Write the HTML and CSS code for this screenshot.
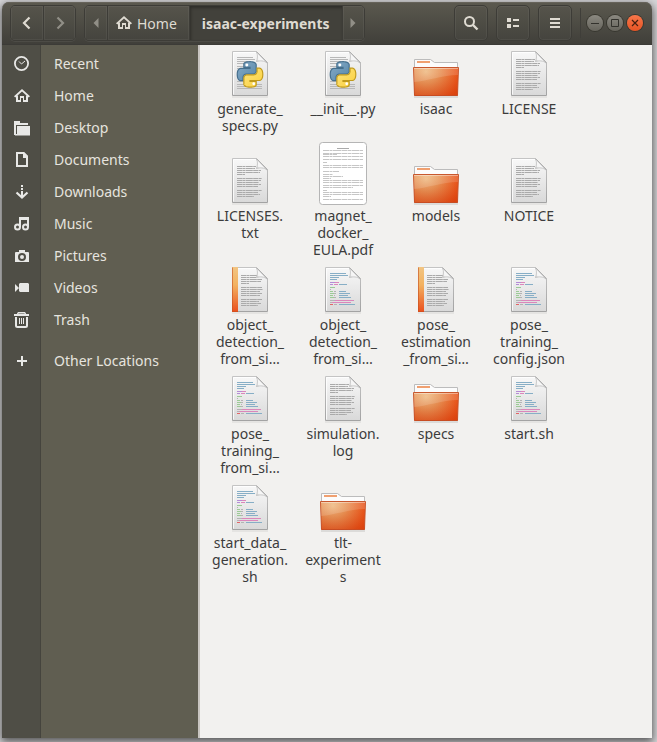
FILE: index.html
```html
<!DOCTYPE html>
<html lang="en">
<head>
<meta charset="utf-8">
<title>isaac-experiments</title>
<link rel="stylesheet" href="styles.css">
</head>
<body>
<svg class="defs" aria-hidden="true">
  <defs>
    <linearGradient id="paper" x1="0" y1="0" x2="0" y2="1"><stop offset="0" stop-color="#f8f8f8"/><stop offset="1" stop-color="#d9d9d9"/></linearGradient>
    <linearGradient id="edge" x1="0" y1="0" x2="0" y2="1"><stop offset="0" stop-color="#c4c4c4"/><stop offset="1" stop-color="#a3a3a3"/></linearGradient>
    <linearGradient id="fold" x1="0" y1="1" x2="1" y2="0"><stop offset="0" stop-color="#b9b9b9"/><stop offset=".25" stop-color="#f4f4f4"/><stop offset="1" stop-color="#ffffff"/></linearGradient>
    <linearGradient id="spine" x1="0" y1="0" x2="0" y2="1"><stop offset="0" stop-color="#f2c583"/><stop offset=".4" stop-color="#f3b160"/><stop offset="1" stop-color="#ea4f1d"/></linearGradient>
    <radialGradient id="folderFace" gradientUnits="userSpaceOnUse" cx="14" cy="22" r="36"><stop offset="0" stop-color="#f0c088"/><stop offset=".35" stop-color="#e99a5c"/><stop offset=".9" stop-color="#ea5217"/><stop offset="1" stop-color="#e8490f"/></radialGradient>
    <linearGradient id="folderShade" x1="0" y1="0" x2="0" y2="1"><stop offset="0" stop-color="#d5501c" stop-opacity="0"/><stop offset="1" stop-color="#c63a10" stop-opacity=".4"/></linearGradient>
    <linearGradient id="pyBlue" x1="0" y1="0" x2="1" y2="1"><stop offset="0" stop-color="#86abc8"/><stop offset="1" stop-color="#5787a8"/></linearGradient>
    <linearGradient id="pyYellow" x1="0" y1="0" x2="1" y2="1"><stop offset="0" stop-color="#fbd03c"/><stop offset="1" stop-color="#fde47e"/></linearGradient>

    <symbol id="page" viewBox="0 0 48 48">
      <path d="M6 47H42" stroke="#000" stroke-opacity=".1"/>
      <path d="M6.500 1.500H30.500L41.500 12.500V45.500H6.500Z" fill="url(#paper)" stroke="url(#edge)"/>
      <path d="M7.500 44.500V2.500H30" fill="none" stroke="#fff" stroke-opacity=".8"/>
      <path d="M30.500 2C32 5 31.500 9 30.500 11.500C34 10.500 38 10.500 41 13Z" fill="url(#fold)" stroke="#b4b4b4" stroke-width=".7"/>
      <path d="M30.500 1.500L41.500 12.500" stroke="#b0b0b0"/>
    </symbol>
    <symbol id="doc-text" viewBox="0 0 48 48">
      <use href="#page"/>
      <path d="M11 9.500H30M11 11.500H29M11 13.500H35M11 15.500H34M11 17.500H19M11 21.500H36M11 23.500H35M11 25.500H33M11 27.500H35M11 29.500H32M11 33.500H36M11 35.500H32M11 37.500H34M11 39.500H28" stroke="#aaa" stroke-dasharray="5 .4 3 .4 7 .4" fill="none"/>
    </symbol>
    <symbol id="doc-book" viewBox="0 0 48 48">
      <use href="#page"/>
      <path d="M15 9.500H31M15 11.500H30M15 13.500H36M15 15.500H35M15 17.500H23M15 21.500H36M15 23.500H37M15 25.500H34M15 27.500H36M15 29.500H34M15 33.500H36M15 35.500H33M15 37.500H35M15 39.500H32" stroke="#aaa" stroke-dasharray="5 .4 3 .4 7 .4" fill="none"/>
      <path d="M6 1H12V46H6Z" fill="url(#spine)"/>
      <path d="M6.500 1.500V45.500H12" stroke="#c5501f" stroke-opacity=".6" fill="none"/>
    </symbol>
    <symbol id="doc-code" viewBox="0 0 48 48">
      <use href="#page"/>
      <g fill="none" stroke-width="1">
        <path stroke="#87aec6" d="M11 7.500H27M11 9.500H29M11 11.500H20M11 13.500H18M20 18.500H28M20 25.500H27M20 27.500H31M20 29.500H29M20 31.500H32M20 38.500H36"/>
        <path stroke="#b58bd6" d="M11 16.500H16M11 18.500H14"/>
        <path stroke="#db86bb" d="M16 16.500H20M15 18.500H19M16 34.500H35M12 36.500H32"/>
        <path stroke="#9bcb95" d="M11 21.500H16M11 25.500H14M11 27.500H15M11 29.500H14M11 31.500H15"/>
        <path stroke="#b3b3b3" d="M11 23.500H12M15 25.500H17M15 27.500H17M15 29.500H16M15 31.500H17M11 34.500H16M11 36.500H13M15 38.500H18"/>
        <path stroke="#e26666" d="M11 38.500H14"/>
      </g>
    </symbol>
    <symbol id="doc-python" viewBox="0 0 48 48">
      <use href="#page"/>
      <path d="M11 7.500H27M11 9.500H29M11 11.500H25M11 13.500H27M11 16.500H20M11 18.500H30M11 21.500H36M11 24.500H30M11 27.500H30M11 31.500H20M11 34.500H36M11 36.500H36M11 38.500H36" stroke="#b8b8b8" fill="none"/>
      <g transform="translate(11.300 11.700) scale(1.060)" stroke-width="1.100">
        <path fill="url(#pyBlue)" stroke="#456f8d" d="M14.25.18l.9.2.73.26.59.3.45.32.34.34.25.34.16.33.1.3.04.26.02.2-.01.13V8.500l-.05.63-.13.55-.21.46-.26.38-.3.31-.33.25-.35.19-.35.14-.33.1-.3.07-.26.04-.21.02H8.770l-.69.05-.59.14-.5.22-.41.27-.33.32-.27.35-.2.36-.15.37-.1.35-.07.32-.04.27-.02.21v3.060H3.170l-.21-.03-.28-.07-.32-.12-.35-.18-.36-.26-.36-.36-.35-.46-.32-.59-.28-.73-.21-.88-.14-1.050-.05-1.230.06-1.220.16-1.040.24-.87.32-.71.36-.57.4-.44.42-.33.42-.24.4-.16.36-.1.32-.05.24-.01h.16l.06.01h8.160v-.83H6.180l-.01-2.750-.02-.37.05-.34.11-.31.17-.28.25-.26.31-.23.38-.2.44-.18.51-.15.58-.12.64-.1.71-.06.77-.04.84-.02 1.270.05z"/>
        <path transform="rotate(180 12 12)" fill="url(#pyYellow)" stroke="#c09a1c" d="M14.25.18l.9.2.73.26.59.3.45.32.34.34.25.34.16.33.1.3.04.26.02.2-.01.13V8.500l-.05.63-.13.55-.21.46-.26.38-.3.31-.33.25-.35.19-.35.14-.33.1-.3.07-.26.04-.21.02H8.770l-.69.05-.59.14-.5.22-.41.27-.33.32-.27.35-.2.36-.15.37-.1.35-.07.32-.04.27-.02.21v3.060H3.170l-.21-.03-.28-.07-.32-.12-.35-.18-.36-.26-.36-.36-.35-.46-.32-.59-.28-.73-.21-.88-.14-1.050-.05-1.230.06-1.220.16-1.040.24-.87.32-.71.36-.57.4-.44.42-.33.42-.24.4-.16.36-.1.32-.05.24-.01h.16l.06.01h8.160v-.83H6.180l-.01-2.750-.02-.37.05-.34.11-.31.17-.28.25-.26.31-.23.38-.2.44-.18.51-.15.58-.12.64-.1.71-.06.77-.04.84-.02 1.270.05z"/>
        <circle cx="9" cy="3.200" r="1.400" fill="#fff" stroke="none"/>
        <circle cx="15.500" cy="20.800" r="1.300" fill="#fff" stroke="none"/>
      </g>
    </symbol>
    <symbol id="folder" viewBox="0 0 48 48">
      <path d="M2 47H46" stroke="#000" stroke-opacity=".18"/>
      <path d="M2.500 18V9.500H18.500L22.500 12.500H45.500V18Z" fill="#fcfcfc" stroke="#bcbcbc"/>
      <path d="M5 12H18" stroke="#f0a070" stroke-width="2"/>
      <path d="M1.500 17.500H46.500L45.500 45.500H2.500Z" fill="url(#folderFace)" stroke="#c8582e"/>
      <path d="M2 17.500H46V46H2Z" fill="url(#folderShade)"/>
      <path d="M2 18H46V25C30 25 16 31 2 32Z" fill="#fff" fill-opacity=".14"/>
      <path d="M2 18.500H46" stroke="#fff" stroke-opacity=".4"/>
    </symbol>
    <symbol id="pdf" viewBox="0 0 48 63">
      <rect x=".5" y=".5" width="47" height="62" rx="3" fill="#fff" stroke="#b5b5b5"/>
      <path d="M18 6.500H30" stroke="#aaa"/>
      <path d="M4 8.500H44M4 11.500H44M4 12.500H18M4 14.500H44M4 17.500H44M4 20.500H8M4 23.500H44M4 25.500H44M4 29.500H20M4 32.500H14M4 34.500H24M4 36.500H12M4 38.500H44M4 40.500H44M4 43.500H44M4 45.500H34M4 48.500H8M4 50.500H44M4 52.500H44M4 54.500H12M4 57.500H44" stroke="#c6c6c6" stroke-dasharray="6 .5 3 .5 8 .5"/>
    </symbol>

    <symbol id="i-home" viewBox="0 0 16 16">
      <path d="M8 1L16 8.200L14.700 9.500L8 3.600L1.300 9.500L0 8.200Z" fill="currentColor"/>
      <path d="M3 7.500V13H6.500M9.500 13H13V7.500" fill="none" stroke="currentColor" stroke-width="2"/>
      <path d="M6 8H10V14H9V10H7V14H6Z" fill="currentColor"/>
    </symbol>
  </defs>
</svg>

<div class="window">
  <header class="bar">
    <div class="group">
      <button class="tool" type="button" aria-label="Back"><svg width="16" height="16" viewBox="0 0 16 16"><path d="M10.500 2.500L5 8L10.500 13.500" fill="none" stroke="currentColor" stroke-width="2.200"/></svg></button>
      <button class="tool dim" type="button" aria-label="Forward"><svg width="16" height="16" viewBox="0 0 16 16"><path d="M5.500 2.500L11 8L5.500 13.500" fill="none" stroke="currentColor" stroke-width="2.200"/></svg></button>
    </div>
    <nav class="group path" aria-label="Path">
      <button class="tool slim dim" type="button" aria-label="Scroll left"><svg width="10" height="10" viewBox="0 0 10 10"><path d="M7.500 0V10L2.500 5Z" fill="currentColor"/></svg></button>
      <button class="tool crumb" type="button"><svg width="16" height="16"><use href="#i-home"/></svg>Home</button>
      <button class="tool crumb current" type="button">isaac-experiments</button>
      <button class="tool slim dim" type="button" aria-label="Scroll right"><svg width="10" height="10" viewBox="0 0 10 10"><path d="M2.500 0V10L7.500 5Z" fill="currentColor"/></svg></button>
    </nav>
    <div class="actions">
      <button class="tool single" type="button" aria-label="Search"><svg width="16" height="16" viewBox="0 0 16 16"><circle cx="6.500" cy="6.500" r="4.500" fill="none" stroke="currentColor" stroke-width="2"/><path d="M10 10L14.500 14.500" stroke="currentColor" stroke-width="2.400"/></svg></button>
      <button class="tool single" type="button" aria-label="View as list"><svg width="16" height="16" viewBox="0 0 16 16"><path d="M2 3H6V7H2ZM2 9H6V13H2ZM8 4H14V6H8ZM8 10H14V12H8Z" fill="currentColor"/></svg></button>
      <button class="tool single" type="button" aria-label="Menu"><svg width="16" height="16" viewBox="0 0 16 16"><path d="M3 3H13V5H3ZM3 7H13V9H3ZM3 11H13V13H3Z" fill="currentColor"/></svg></button>
    </div>
    <div class="controls">
      <button class="ctl" type="button" aria-label="Minimize"><svg width="10" height="10" viewBox="0 0 10 10"><path d="M1 5.500H9" stroke="currentColor"/></svg></button>
      <button class="ctl" type="button" aria-label="Maximize"><svg width="10" height="10" viewBox="0 0 10 10"><path d="M1.500 1.500H8.500V8.500H1.500Z" fill="none" stroke="currentColor"/></svg></button>
      <button class="ctl close" type="button" aria-label="Close"><svg width="10" height="10" viewBox="0 0 10 10"><path d="M2 2L8 8M8 2L2 8" stroke="currentColor" stroke-width="1.200"/></svg></button>
    </div>
  </header>

  <div class="body">
    <nav class="side" aria-label="Places">
      <a class="place" href="#recent"><span class="ico"><svg width="16" height="16" viewBox="0 0 16 16"><circle cx="7.500" cy="7.500" r="6.600" fill="none" stroke="currentColor" stroke-width="1.800"/><path d="M5 5.500L7.500 8L11 5" fill="none" stroke="currentColor"/></svg></span>Recent</a>
      <a class="place" href="#home"><span class="ico"><svg width="16" height="16"><use href="#i-home"/></svg></span>Home</a>
      <a class="place" href="#desktop"><span class="ico"><svg width="16" height="16" viewBox="0 0 16 16"><path d="M0 1H6V3H14V5H2V15H0Z" fill="currentColor"/><path d="M3 6H16V15.500H1V14H3Z" fill="currentColor"/></svg></span>Desktop</a>
      <a class="place" href="#documents"><span class="ico"><svg width="16" height="16" viewBox="0 0 16 16"><path d="M3 1H9.500L13 4.500V14H3Z" fill="none" stroke="currentColor" stroke-width="2"/><path d="M9 1V6H14V4L10 0Z" fill="currentColor"/></svg></span>Documents</a>
      <a class="place" href="#downloads"><span class="ico"><svg width="16" height="16" viewBox="0 0 16 16"><path d="M7 1H9V3H7ZM7 4H9V6H7ZM7 7H9V13H7Z" fill="currentColor"/><path d="M2.500 8.500L8 13.500L13.500 8.500" fill="none" stroke="currentColor" stroke-width="2.200"/></svg></span>Downloads</a>
      <a class="place" href="#music"><span class="ico"><svg width="16" height="16" viewBox="0 0 16 16"><path d="M5 1H15V11H13V4H7V11H5Z" fill="currentColor"/><circle cx="3.500" cy="11" r="2.500" fill="none" stroke="currentColor" stroke-width="2"/><circle cx="11.500" cy="11" r="2.500" fill="none" stroke="currentColor" stroke-width="2"/></svg></span>Music</a>
      <a class="place" href="#pictures"><span class="ico"><svg width="16" height="16" viewBox="0 0 16 16"><path fill="currentColor" fill-rule="evenodd" d="M5 2H11V4H14Q15 4 15 5V14H1V5Q1 4 2 4H5ZM8 5A4 4 0 1 0 8 13A4 4 0 1 0 8 5ZM8 7A2 2 0 1 1 8 11A2 2 0 1 1 8 7Z"/></svg></span>Pictures</a>
      <a class="place" href="#videos"><span class="ico"><svg width="16" height="16" viewBox="0 0 16 16"><path d="M6 3H14L15 4V12H6L5 11V4ZM1 4L5 8L1 12Z" fill="currentColor"/></svg></span>Videos</a>
      <a class="place" href="#trash"><span class="ico"><svg width="16" height="16" viewBox="0 0 16 16"><path d="M3 1.500L4 0H11L12 1.500V2H15V4H0V2H3ZM4.500 2H10.500V1.500H4.500Z" fill="currentColor" fill-rule="evenodd"/><path d="M2 5V13.500Q2 15 3.500 15H11.500Q13 15 13 13.500V5" fill="none" stroke="currentColor" stroke-width="2"/><path d="M5.500 6V12M7.500 6V12M9.500 6V12" stroke="currentColor"/></svg></span>Trash</a>
      <a class="place apart" href="#other"><span class="ico"><svg width="16" height="16" viewBox="0 0 16 16"><path d="M7 3H9V7H13V9H9V13H7V9H3V7H7Z" fill="currentColor"/></svg></span>Other Locations</a>
    </nav>

    <main class="files">
      <a class="file" href="#f1"><svg class="thumb"><use href="#doc-python"/></svg><span>generate_<br>specs.py</span></a>
      <a class="file" href="#f2"><svg class="thumb"><use href="#doc-python"/></svg><span>__init__.py</span></a>
      <a class="file" href="#f3"><svg class="thumb"><use href="#folder"/></svg><span>isaac</span></a>
      <a class="file" href="#f4"><svg class="thumb"><use href="#doc-text"/></svg><span>LICENSE</span></a>

      <a class="file" href="#f5"><svg class="thumb"><use href="#doc-text"/></svg><span>LICENSES.<br>txt</span></a>
      <a class="file" href="#f6"><svg class="thumb preview"><use href="#pdf"/></svg><span>magnet_<br>docker_<br>EULA.pdf</span></a>
      <a class="file" href="#f7"><svg class="thumb"><use href="#folder"/></svg><span>models</span></a>
      <a class="file" href="#f8"><svg class="thumb"><use href="#doc-text"/></svg><span>NOTICE</span></a>

      <a class="file" href="#f9"><svg class="thumb"><use href="#doc-book"/></svg><span>object_<br>detection_<br>from_si…</span></a>
      <a class="file" href="#f10"><svg class="thumb"><use href="#doc-code"/></svg><span>object_<br>detection_<br>from_si…</span></a>
      <a class="file" href="#f11"><svg class="thumb"><use href="#doc-book"/></svg><span>pose_<br>estimation<br>_from_si…</span></a>
      <a class="file" href="#f12"><svg class="thumb"><use href="#doc-code"/></svg><span>pose_<br>training_<br>config.json</span></a>

      <a class="file" href="#f13"><svg class="thumb"><use href="#doc-code"/></svg><span>pose_<br>training_<br>from_si…</span></a>
      <a class="file" href="#f14"><svg class="thumb"><use href="#doc-text"/></svg><span>simulation.<br>log</span></a>
      <a class="file" href="#f15"><svg class="thumb"><use href="#folder"/></svg><span>specs</span></a>
      <a class="file" href="#f16"><svg class="thumb"><use href="#doc-code"/></svg><span>start.sh</span></a>

      <a class="file" href="#f17"><svg class="thumb"><use href="#doc-code"/></svg><span>start_data_<br>generation.<br>sh</span></a>
      <a class="file" href="#f18"><svg class="thumb"><use href="#folder"/></svg><span>tlt-<br>experiment<br>s</span></a>
    </main>
  </div>
</div>
</body>
</html>
```
FILE: styles.css
```css
* { box-sizing: border-box; }

body {
  margin: 0;
  min-height: 100vh;
  padding: 2px 5px 4px 2px;
  display: flex;
  background: #d6d6d8;
  font: 14px/17px "Noto Sans", "Open Sans", sans-serif;
  overflow: hidden;
}

a { color: inherit; text-decoration: none; }

.defs { position: absolute; width: 0; height: 0; }

.window {
  flex: 1;
  display: flex;
  flex-direction: column;
  border-radius: 7px 7px 0 0;
  box-shadow: 0 3px 9px 1px rgba(0, 0, 0, 0.6);
}

.bar {
  display: flex;
  align-items: center;
  padding: 3px 9px 3px 8px;
  border-bottom: 1px solid #3c3b37;
  border-radius: 7px 7px 0 0;
  background: linear-gradient(#5b594f, #403f3a);
  box-shadow: inset 0 1px 0 #66635a;
  color: #dfdbd2;
}

.group {
  display: flex;
  margin-right: 8px;
  border: 1px solid #3d3c37;
  border-radius: 5px;
  box-shadow: 0 1px 0 rgba(255, 255, 255, 0.06);
  overflow: hidden;
}

.tool {
  display: flex;
  align-items: center;
  justify-content: center;
  gap: 5px;
  width: 32px;
  height: 34px;
  padding: 0;
  border: 0;
  border-left: 1px solid #3d3c37;
  background: linear-gradient(#56544b, #45443e);
  box-shadow: inset 0 0 0 1px rgba(255, 255, 255, 0.05);
  color: #dfdbd2;
  font: inherit;
}

.tool:first-child { border-left: 0; }
.tool.slim { width: 22px; }
.tool.dim { color: #918f87; }
.tool.crumb { width: auto; padding: 0 12px 0 8px; }

.tool.crumb.current {
  padding: 0 12px;
  background: #42413b;
  box-shadow: inset 1px 2px 3px rgba(0, 0, 0, 0.3);
  font-weight: bold;
}

.actions { display: flex; gap: 8px; margin-left: auto; }

.tool.single,
.tool.single:first-child {
  width: 34px;
  height: 36px;
  border: 1px solid #3d3c37;
  border-radius: 5px;
}

.controls {
  display: flex;
  align-items: center;
  gap: 4px;
  height: 30px;
  margin-left: 8px;
  padding-left: 6px;
  border-left: 1px solid #3f3e39;
}

.ctl {
  display: flex;
  align-items: center;
  justify-content: center;
  width: 16px;
  height: 16px;
  padding: 0;
  border: 0;
  border-radius: 50%;
  background: linear-gradient(#8b8981, #66645c);
  box-shadow: 0 0 0 1px #38372f;
  color: #33322d;
}

.ctl.close { background: linear-gradient(#f7764a, #e65424); color: #45200f; }

.body { flex: 1; display: flex; }

.side {
  width: 196px;
  padding-top: 2px;
  background: linear-gradient(90deg, #4f4e46 38px, #45443d 38px, #45443d 39px, #605e51 39px);
  color: #e6e4df;
}

.place { display: flex; align-items: center; height: 32px; }
.place.apart { margin-top: 9px; }

.ico {
  display: flex;
  justify-content: center;
  width: 40px;
  margin-right: 12px;
  padding-top: 2px;
  color: #e8e8e6;
}

.files {
  flex: 1;
  display: grid;
  grid-template-columns: repeat(auto-fill, 93px);
  align-content: start;
  align-items: baseline;
  row-gap: 8px;
  padding: 5px 76px 5px 3px;
  border-left: 2px solid #c9c5c1;
  background: #f2f1ef;
  color: #3c3c3c;
}

.file {
  display: flex;
  flex-direction: column;
  align-items: center;
  gap: 2px;
  padding-left: 1px;
  text-align: center;
  white-space: nowrap;
}

.thumb { width: 48px; height: 48px; }
.thumb.preview { height: 63px; }
```
